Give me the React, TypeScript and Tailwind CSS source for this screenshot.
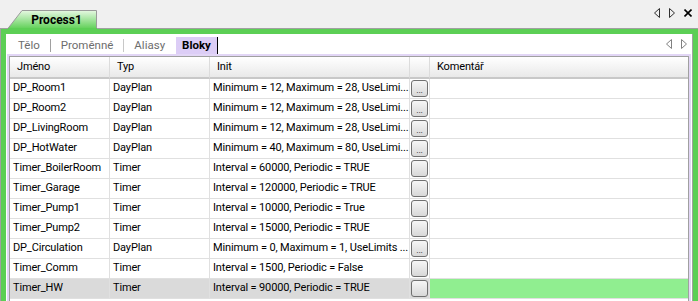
import React from 'react';

type Row = { name: string; type: string; init: string; dots: boolean };

const rows: Row[] = [
  { name: 'DP_Room1', type: 'DayPlan', init: 'Minimum = 12, Maximum = 28, UseLimi...', dots: true },
  { name: 'DP_Room2', type: 'DayPlan', init: 'Minimum = 12, Maximum = 28, UseLimi...', dots: true },
  { name: 'DP_LivingRoom', type: 'DayPlan', init: 'Minimum = 12, Maximum = 28, UseLimi...', dots: true },
  { name: 'DP_HotWater', type: 'DayPlan', init: 'Minimum = 40, Maximum = 80, UseLimi...', dots: true },
  { name: 'Timer_BoilerRoom', type: 'Timer', init: 'Interval = 60000, Periodic = TRUE', dots: false },
  { name: 'Timer_Garage', type: 'Timer', init: 'Interval = 120000, Periodic = TRUE', dots: false },
  { name: 'Timer_Pump1', type: 'Timer', init: 'Interval = 10000, Periodic = True', dots: false },
  { name: 'Timer_Pump2', type: 'Timer', init: 'Interval = 15000, Periodic = TRUE', dots: false },
  { name: 'DP_Circulation', type: 'DayPlan', init: 'Minimum = 0, Maximum = 1, UseLimits ...', dots: true },
  { name: 'Timer_Comm', type: 'Timer', init: 'Interval = 1500, Periodic = False', dots: false },
  { name: 'Timer_HW', type: 'Timer', init: 'Interval = 90000, Periodic = TRUE', dots: false },
];

function ArrowLeft({ color }: { color: string }) {
  return (
    <svg width="6" height="10" viewBox="0 0 6 10">
      <path d="M5.5 0.5 L0.5 5 L5.5 9.5 Z" fill="none" stroke={color} strokeWidth="1" />
    </svg>
  );
}

function ArrowRight({ color }: { color: string }) {
  return (
    <svg width="6" height="10" viewBox="0 0 6 10">
      <path d="M0.5 0.5 L5.5 5 L0.5 9.5 Z" fill="none" stroke={color} strokeWidth="1" />
    </svg>
  );
}

function CellButton({ dots }: { dots: boolean }) {
  return (
    <div className="w-[17px] h-[17px] rounded-[3px] border border-[#707070] bg-gradient-to-b from-[#f6f6f6] to-[#d8d8d8] flex items-end justify-center">
      {dots && <span className="text-[9px] leading-[11px] text-[#202020]">...</span>}
    </div>
  );
}

export default function App() {
  return (
    <div
      className="w-[698px] h-[301px] overflow-hidden flex flex-col bg-[#f0f0f0] text-[11px] text-black"
      style={{ fontFamily: 'Roboto, "Liberation Sans", sans-serif' }}
    >
      {/* Document tab strip */}
      <div className="h-[29px] flex items-end pl-[7px] border-b border-[#a0a0a0] relative">
        <div className="relative w-[91px] h-[19px] -mb-px flex items-center justify-center pl-[8px]">
          <svg className="absolute inset-0" width="91" height="19" viewBox="0 0 91 19">
            <defs>
              <linearGradient id="tabg" x1="0" y1="0" x2="0" y2="1">
                <stop offset="0" stopColor="#e6f8e2" />
                <stop offset="1" stopColor="#5fd057" />
              </linearGradient>
            </defs>
            <path d="M0.5 19 L15 0.5 L89.5 0.5 L89.5 19 Z" fill="url(#tabg)" stroke="#9a9a9a" strokeWidth="1" />
            <rect x="1" y="18" width="89" height="1" fill="#5ccf55" />
          </svg>
          <span className="relative font-bold text-[12px]">Process1</span>
        </div>
        <div className="ml-auto mb-[10px] mr-[6px] flex items-center gap-[9px]">
          <ArrowLeft color="#303030" />
          <ArrowRight color="#303030" />
          <svg width="8" height="8" viewBox="0 0 8 8">
            <path d="M0.5 0.5 L7.5 7.5 M7.5 0.5 L0.5 7.5" stroke="#000" strokeWidth="1.6" />
          </svg>
        </div>
      </div>

      {/* Green frame */}
      <div className="flex-1 flex border-l border-[#a0a0a0]">
        <div className="flex-1 flex border-x-[5px] border-t-[5px] border-[#5ccf55]">
          <div className="flex-1 flex flex-col bg-white border-r border-[#a0a0a0]">
            {/* Sub tabs */}
            <div className="h-[20px] flex items-end pl-[3px]">
              <div className="flex items-center h-[17px] text-[11.5px] text-[#6d6d6d]">
                <span className="pl-[9px] pr-[10px]">Tělo</span>
                <span className="w-px h-[13px] bg-[#a0a0a0]" />
                <span className="px-[10px]">Proměnné</span>
                <span className="w-px h-[13px] bg-[#c8c8c8]" />
                <span className="pl-[10px] pr-[11px]">Aliasy</span>
                <span className="h-[17px] px-[6px] bg-[#dccdf6] text-black font-bold flex items-center">Bloky</span>
                <span className="w-px h-[17px] bg-black" />
              </div>
              <div className="ml-auto mb-[5px] mr-[5px] flex items-center gap-[9px]">
                <ArrowLeft color="#808080" />
                <ArrowRight color="#808080" />
              </div>
            </div>

            {/* Lavender panel with grid */}
            <div className="flex-1 bg-[#e2d6f6] pt-[2px] px-[2px] ml-px mr-px">
              <div className="h-full bg-white border border-[#a0a0a0] border-b-0">
                <div className="grid grid-cols-[100px_100px_200px_20px_1fr] tracking-[-0.15px]">
                  {/* Header */}
                  {['Jméno', 'Typ', 'Init', '', 'Komentář'].map((h, i) => (
                    <div
                      key={i}
                      className={`h-[22px] flex items-center pl-[7px] bg-gradient-to-b from-white to-[#e9e9e9] border-b-2 border-[#c8c8c8] ${
                        i < 4 ? 'border-r border-r-[#dcdcdc]' : ''
                      }`}
                    >
                      {h}
                    </div>
                  ))}
                  {rows.map((r, ri) => {
                    const last = ri === rows.length - 1;
                    const bg = last ? 'bg-[#dadada]' : 'bg-white';
                    return (
                      <React.Fragment key={r.name}>
                        <div className={`h-[20px] flex items-center pl-[3px] border-r border-b border-[#e0e0e0] whitespace-nowrap ${bg}`}>{r.name}</div>
                        <div className={`h-[20px] flex items-center pl-[3px] border-r border-b border-[#e0e0e0] ${bg}`}>{r.type}</div>
                        <div className={`h-[20px] flex items-center pl-[3px] border-r border-b border-[#e0e0e0] whitespace-nowrap ${bg}`}>{r.init}</div>
                        <div className={`h-[20px] flex items-center justify-center border-r border-b border-[#e0e0e0] ${bg}`}>
                          <CellButton dots={r.dots} />
                        </div>
                        <div className={`h-[20px] border-b border-[#e0e0e0] ${last ? 'bg-[#90ee90]' : 'bg-white'}`} />
                      </React.Fragment>
                    );
                  })}
                </div>
              </div>
            </div>
          </div>
        </div>
      </div>
    </div>
  );
}
